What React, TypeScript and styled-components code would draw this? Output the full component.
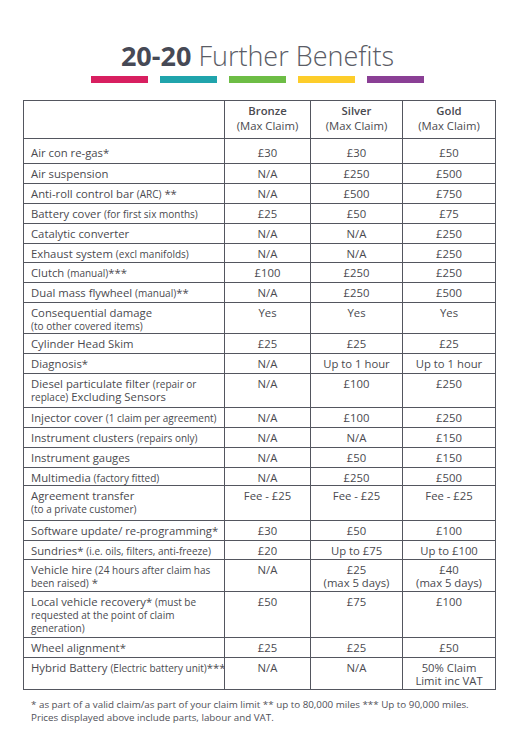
import React from 'react'
import styled, { createGlobalStyle } from 'styled-components'

const GlobalStyle = createGlobalStyle`
  html, body {
    margin: 0;
    padding: 0;
    background: #ffffff;
  }
  body {
    font-family: 'Open Sans', 'Liberation Sans', sans-serif;
    color: #4a4a4f;
  }
`

const Page = styled.div`
  width: 523px;
  padding-top: 37px;
`

const Header = styled.header`
  width: 469px;
  margin-left: 23px;
  display: flex;
  flex-direction: column;
  align-items: center;
`

const Title = styled.h1`
  margin: 0;
  font-size: 27px;
  line-height: 37px;
  font-weight: 300;
  color: #5a5c66;
  white-space: nowrap;
`

const TitleStrong = styled.span`
  font-weight: 700;
  color: #464955;
`

const Bars = styled.div`
  display: flex;
  gap: 12px;
  margin-top: 2px;
`

const Bar = styled.span<{ $color: string }>`
  display: block;
  width: 57px;
  height: 7px;
  background: ${({ $color }) => $color};
`

const Table = styled.table`
  margin: 17px 0 0 23px;
  width: 472px;
  border-collapse: collapse;
  table-layout: fixed;
  font-size: 11.3px;
  line-height: 13px;
`

const HeadCell = styled.th`
  border: 1px solid #54565f;
  padding: 3px 2px 0;
  vertical-align: top;
  font-weight: 400;
  line-height: 14.5px;
  text-align: center;
  color: #4a4a4f;
`

const TierName = styled.span`
  display: block;
  font-weight: 600;
`

const Row = styled.tr<{ $h: number }>`
  height: ${({ $h }) => $h}px;
`

const Cell = styled.td<{ $first?: boolean }>`
  border: 1px solid #54565f;
  padding: ${({ $first }) => ($first ? '7px' : '3px')} 0 0 7px;
  vertical-align: top;
  white-space: nowrap;
  overflow: hidden;
`

const ValueCell = styled(Cell)`
  text-align: center;
  padding-left: 2px;
  padding-right: 2px;
`

const Small = styled.span`
  font-size: 10px;
  line-height: 12px;
`

const Footnote = styled.p`
  margin: 8px 0 0 31px;
  width: 470px;
  font-size: 9.8px;
  line-height: 13px;
  color: #505058;
`

type Item = {
  label: React.ReactNode
  values: React.ReactNode[]
  h: number
}

const items: Item[] = [
  { label: 'Air con re-gas*', values: ['£30', '£30', '£50'], h: 25 },
  { label: 'Air suspension', values: ['N/A', '£250', '£500'], h: 20 },
  { label: <>Anti-roll control bar <Small>(ARC)</Small> **</>, values: ['N/A', '£500', '£750'], h: 20 },
  { label: <>Battery cover <Small>(for first six months)</Small></>, values: ['£25', '£50', '£75'], h: 20 },
  { label: 'Catalytic converter', values: ['N/A', 'N/A', '£250'], h: 20 },
  { label: <>Exhaust system <Small>(excl manifolds)</Small></>, values: ['N/A', 'N/A', '£250'], h: 19 },
  { label: <>Clutch <Small>(manual)</Small>***</>, values: ['£100', '£250', '£250'], h: 20 },
  { label: <>Dual mass flywheel <Small>(manual)</Small>**</>, values: ['N/A', '£250', '£500'], h: 20 },
  { label: <>Consequential damage<br /><Small>(to other covered items)</Small></>, values: ['Yes', 'Yes', 'Yes'], h: 31 },
  { label: 'Cylinder Head Skim', values: ['£25', '£25', '£25'], h: 20 },
  { label: 'Diagnosis*', values: ['N/A', 'Up to 1 hour', 'Up to 1 hour'], h: 20 },
  { label: <>Diesel particulate filter <Small>(repair or<br />replace)</Small> Excluding Sensors</>, values: ['N/A', '£100', '£250'], h: 34 },
  { label: <>Injector cover <Small>(1 claim per agreement)</Small></>, values: ['N/A', '£100', '£250'], h: 20 },
  { label: <>Instrument clusters <Small>(repairs only)</Small></>, values: ['N/A', 'N/A', '£150'], h: 20 },
  { label: 'Instrument gauges', values: ['N/A', '£50', '£150'], h: 20 },
  { label: <>Multimedia <Small>(factory fitted)</Small></>, values: ['N/A', '£250', '£500'], h: 18 },
  { label: <>Agreement transfer<br /><Small>(to a private customer)</Small></>, values: ['Fee - £25', 'Fee - £25', 'Fee - £25'], h: 35 },
  { label: 'Software update/ re-programming*', values: ['£30', '£50', '£100'], h: 20 },
  { label: <>Sundries* <Small>(i.e. oils, filters, anti-freeze)</Small></>, values: ['£20', 'Up to £75', 'Up to £100'], h: 19 },
  { label: <>Vehicle hire <Small>(24 hours after claim has<br />been raised)</Small> *</>, values: ['N/A', <>£25<br />(max 5 days)</>, <>£40<br />(max 5 days)</>], h: 32 },
  { label: <>Local vehicle recovery* <Small>(must be<br />requested at the point of claim<br />generation)</Small></>, values: ['£50', '£75', '£100'], h: 46 },
  { label: 'Wheel alignment*', values: ['£25', '£25', '£50'], h: 20 },
  { label: <>Hybrid Battery <Small>(Electric battery unit)</Small>***</>, values: ['N/A', 'N/A', <>50% Claim<br />Limit inc VAT</>], h: 32 },
]

const tiers = ['Bronze', 'Silver', 'Gold']
const barColors = ['#d81f60', '#20a4ac', '#6dbd45', '#fdcd2a', '#8a3f95']

export default function App() {
  return (
    <Page>
      <GlobalStyle />
      <Header>
        <Title>
          <TitleStrong>20-20</TitleStrong> Further Benefits
        </Title>
        <Bars>
          {barColors.map((c) => (
            <Bar key={c} $color={c} />
          ))}
        </Bars>
      </Header>
      <Table>
        <colgroup>
          <col style={{ width: 201 }} />
          <col style={{ width: 86 }} />
          <col style={{ width: 92 }} />
          <col style={{ width: 93 }} />
        </colgroup>
        <thead>
          <Row $h={38}>
            <HeadCell />
            {tiers.map((t) => (
              <HeadCell key={t}>
                <TierName>{t}</TierName>
                (Max Claim)
              </HeadCell>
            ))}
          </Row>
        </thead>
        <tbody>
          {items.map((item, i) => (
            <Row key={i} $h={item.h}>
              <Cell $first={i === 0}>{item.label}</Cell>
              {item.values.map((v, j) => (
                <ValueCell key={j} $first={i === 0}>
                  {v}
                </ValueCell>
              ))}
            </Row>
          ))}
        </tbody>
      </Table>
      <Footnote>
        * as part of a valid claim/as part of your claim limit ** up to 80,000 miles *** Up to 90,000 miles.
        <br />
        Prices displayed above include parts, labour and VAT.
      </Footnote>
    </Page>
  )
}
